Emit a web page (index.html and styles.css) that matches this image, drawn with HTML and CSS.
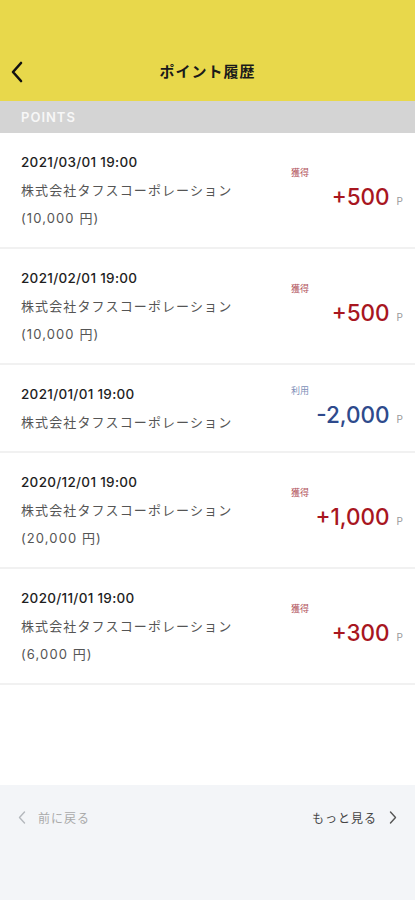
FILE: index.html
```html
<!DOCTYPE html>
<html lang="ja">
<head>
    <meta charset="UTF-8">
    <meta name="viewport" content="width=device-width, initial-scale=1.0">
    <title>ポイント履歴</title>
    <link rel="stylesheet" href="styles.css">
</head>
<body>

    <!-- Header -->
    <header class="app-header">
        <a class="back-btn" href="#">
            <svg width="14" height="22" viewBox="0 0 14 22"><path d="M11 2 L3 11 L11 20" fill="none" stroke="#111" stroke-width="2.6" stroke-linecap="round" stroke-linejoin="round"/></svg>
        </a>
        <h1>ポイント履歴</h1>
    </header>

    <div class="section-title">POINTS</div>

    <!-- History list -->
    <ul class="history">
        <li class="item">
            <div class="info">
                <div class="date">2021/03/01 19:00</div>
                <div class="shop">株式会社タフスコーポレーション</div>
                <div class="shop">(10,000 円)</div>
            </div>
            <div class="points">
                <span class="tag earn">獲得</span>
                <div class="amount earn">+500<span class="unit">P</span></div>
            </div>
        </li>
        <li class="item">
            <div class="info">
                <div class="date">2021/02/01 19:00</div>
                <div class="shop">株式会社タフスコーポレーション</div>
                <div class="shop">(10,000 円)</div>
            </div>
            <div class="points">
                <span class="tag earn">獲得</span>
                <div class="amount earn">+500<span class="unit">P</span></div>
            </div>
        </li>
        <li class="item">
            <div class="info">
                <div class="date">2021/01/01 19:00</div>
                <div class="shop">株式会社タフスコーポレーション</div>
            </div>
            <div class="points">
                <span class="tag use">利用</span>
                <div class="amount use">-2,000<span class="unit">P</span></div>
            </div>
        </li>
        <li class="item">
            <div class="info">
                <div class="date">2020/12/01 19:00</div>
                <div class="shop">株式会社タフスコーポレーション</div>
                <div class="shop">(20,000 円)</div>
            </div>
            <div class="points">
                <span class="tag earn">獲得</span>
                <div class="amount earn">+1,000<span class="unit">P</span></div>
            </div>
        </li>
        <li class="item">
            <div class="info">
                <div class="date">2020/11/01 19:00</div>
                <div class="shop">株式会社タフスコーポレーション</div>
                <div class="shop">(6,000 円)</div>
            </div>
            <div class="points">
                <span class="tag earn">獲得</span>
                <div class="amount earn">+300<span class="unit">P</span></div>
            </div>
        </li>
    </ul>

    <!-- Pager -->
    <footer class="pager">
        <a class="prev" href="#">
            <svg width="8" height="13" viewBox="0 0 8 13"><path d="M6.5 1 L1.5 6.5 L6.5 12" fill="none" stroke="#b4b8bd" stroke-width="1.4" stroke-linecap="round" stroke-linejoin="round"/></svg>
            前に戻る
        </a>
        <a class="next" href="#">
            もっと見る
            <svg width="8" height="13" viewBox="0 0 8 13"><path d="M1.5 1 L6.5 6.5 L1.5 12" fill="none" stroke="#555" stroke-width="1.4" stroke-linecap="round" stroke-linejoin="round"/></svg>
        </a>
    </footer>

</body>
</html>
```

FILE: styles.css
```css
/* Base */
body {
    margin: 0;
    padding: 0;
    font-family: 'Inter', 'Noto Sans CJK JP', sans-serif;
    background-color: #fff;
    color: #222;
    width: 415px;
    min-height: 900px;
    display: flex;
    flex-direction: column;
}

a {
    text-decoration: none;
    color: inherit;
}

/* Header */
.app-header {
    background-color: #e8d84b;
    height: 101px;
    display: flex;
    align-items: flex-end;
    justify-content: center;
    position: relative;
    box-sizing: border-box;
    padding-bottom: 18px;
}

.app-header h1 {
    margin: 0;
    font-size: 15px;
    font-weight: 700;
    letter-spacing: 1px;
    color: #1a1a1a;
    line-height: 22px;
}

.back-btn {
    position: absolute;
    left: 10px;
    bottom: 18px;
    display: flex;
}

.section-title {
    background-color: #d4d4d4;
    color: #f7f7f7;
    font-size: 13px;
    font-weight: 600;
    letter-spacing: 1px;
    height: 32px;
    line-height: 32px;
    padding-left: 21px;
}

/* List */
.history {
    list-style: none;
    margin: 0;
    padding: 0;
    flex: 1;
}

.item {
    display: flex;
    align-items: center;
    justify-content: space-between;
    padding: 15px 12px 15px 21px;
    border-bottom: 2px solid #f1f1f1;
}

.date,
.shop {
    height: 28px;
    line-height: 28px;
    white-space: nowrap;
}

.date {
    font-size: 13.5px;
    font-weight: 500;
    letter-spacing: 0.3px;
    color: #1f1f1f;
}

.shop {
    font-size: 13px;
    letter-spacing: 1.1px;
    color: #555;
}

.points {
    width: 112px;
    padding-top: 2px;
}

.tag {
    display: block;
    font-size: 9px;
    line-height: 12px;
    margin-bottom: 4px;
}

.tag.earn {
    color: #b0505a;
}

.tag.use {
    color: #8090b8;
}

.amount {
    text-align: right;
    font-size: 22.5px;
    font-weight: 500;
    line-height: 28px;
}

.amount.earn {
    color: #a8161f;
}

.amount.use {
    color: #2e4a8c;
}

.unit {
    font-size: 10px;
    color: #999;
    margin-left: 7px;
    font-weight: 400;
}

/* Pager */
.pager {
    background-color: #f3f5f8;
    height: 115px;
    display: flex;
    justify-content: space-between;
    align-items: flex-start;
    padding: 24px 18px 0 18px;
    box-sizing: border-box;
}

.pager a {
    display: flex;
    align-items: center;
    gap: 12px;
    font-size: 12px;
    letter-spacing: 1px;
}

.prev {
    color: #aaa;
}

.next {
    color: #444;
}
```
